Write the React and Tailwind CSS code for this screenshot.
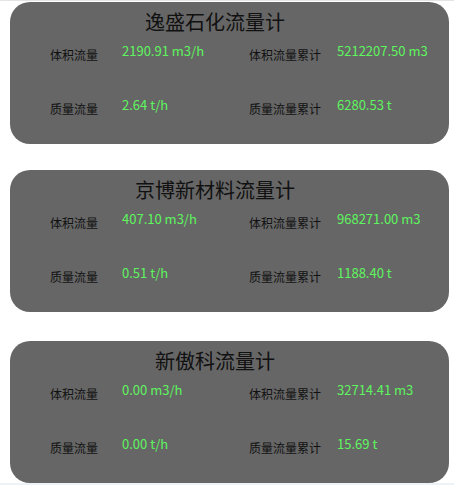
import React from 'react';

const meters = [
  { name: '逸盛石化流量计', flow: '2190.91 m3/h', total: '5212207.50 m3', mass: '2.64 t/h', massTotal: '6280.53 t', mt: 'mt-[1px]' },
  { name: '京博新材料流量计', flow: '407.10 m3/h', total: '968271.00 m3', mass: '0.51 t/h', massTotal: '1188.40 t', mt: 'mt-[26px]' },
  { name: '新傲科流量计', flow: '0.00 m3/h', total: '32714.41 m3', mass: '0.00 t/h', massTotal: '15.69 t', mt: 'mt-[29px]' },
];

function Label({ children }) {
  return <div className="text-[12px] leading-[30px] text-[#111] pt-[4px]">{children}</div>;
}

function Value({ children }) {
  return <div className="text-[13px] leading-[30px] text-[#5ef55e]">{children}</div>;
}

function MeterCard({ m }) {
  return (
    <div className={`${m.mt} ml-[10px] w-[439px] h-[142px] rounded-[20px] bg-[#666666]`}>
      <div className="pt-[6px] pr-[29px] text-center text-[20px] leading-[28px] text-[#111]">{m.name}</div>
      <div className="pl-[40px] grid grid-cols-[72px_127px_88px_1fr] grid-rows-[30px_30px] gap-y-[24px]">
        <Label>体积流量</Label>
        <Value>{m.flow}</Value>
        <Label>体积流量累计</Label>
        <Value>{m.total}</Value>
        <Label>质量流量</Label>
        <Value>{m.mass}</Value>
        <Label>质量流量累计</Label>
        <Value>{m.massTotal}</Value>
      </div>
    </div>
  );
}

export default function App() {
  return (
    <div
      className="w-[454px] h-[485px] overflow-hidden bg-white border-t border-[#e4e4e4] flex flex-col"
      style={{ fontFamily: '"Microsoft YaHei", "Noto Sans CJK SC", "Noto Sans", sans-serif' }}
    >
      {meters.map((m) => (
        <MeterCard key={m.name} m={m} />
      ))}
      <div className="mt-auto h-[2px] bg-[#eef1f6]" />
    </div>
  );
}
